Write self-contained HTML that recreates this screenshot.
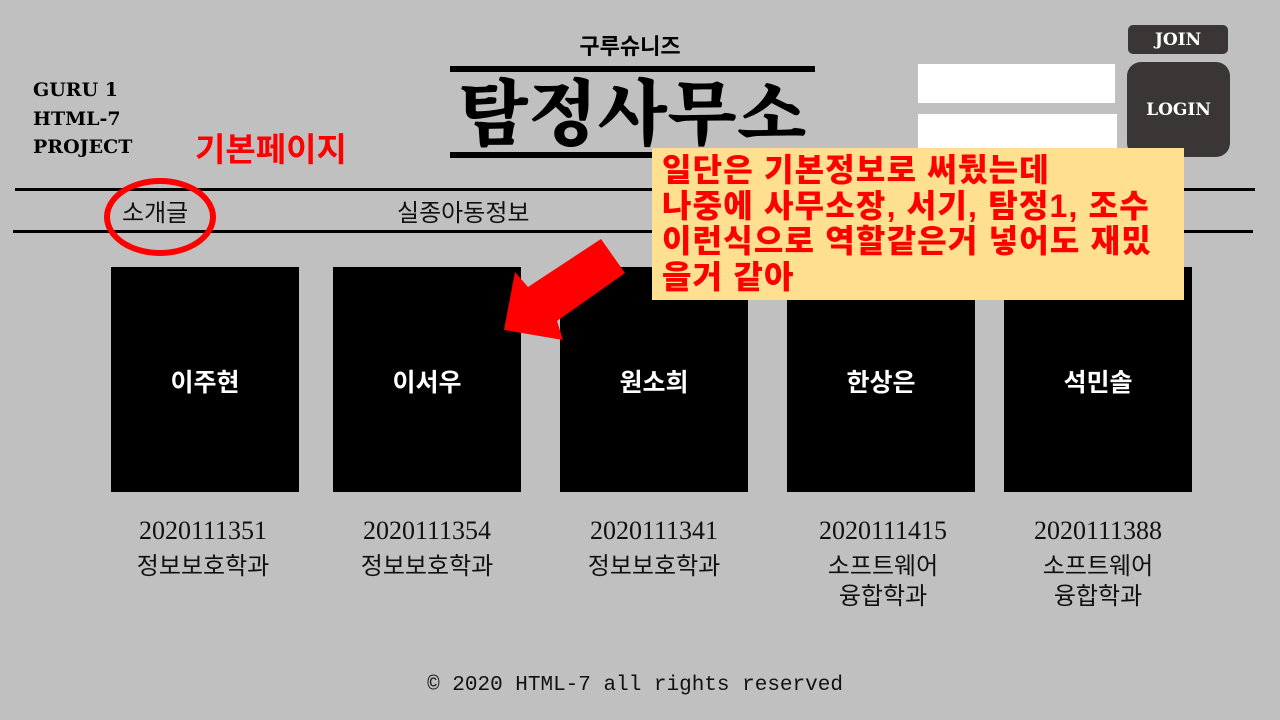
<!DOCTYPE html>
<html><head><meta charset="utf-8"><style>
body{margin:0;width:1280px;height:720px;background:#c0c0c0;position:relative;overflow:hidden;font-family:"Liberation Sans","Noto Sans CJK KR",sans-serif}
.a{position:absolute}
.line{position:absolute;background:#000}
.card{position:absolute;top:267px;width:188px;height:225px;background:#000;color:#fff;font-weight:bold;font-size:25px;text-align:center;line-height:232px}
.info{position:absolute;top:513px;width:240px;text-align:center;font-family:"Liberation Serif","Noto Sans CJK KR",serif;font-size:26px;line-height:36px;color:#111}
.info span{display:block;font-family:"Liberation Sans","Noto Sans CJK KR",sans-serif;font-size:24px;line-height:30px;margin-top:3px}
.g{font-family:"DejaVu Serif",serif;font-weight:bold;font-size:19px;line-height:28.5px;color:#000}
</style></head><body>
<div class="a" style="left:560px;top:32px;width:140px;text-align:center;font-weight:bold;font-size:22px;line-height:30px">구루슈니즈</div>
<div class="line" style="left:450px;top:66px;width:365px;height:6px"></div>
<div class="a" style="left:440px;top:64px;width:385px;text-align:center;font-family:'Noto Serif CJK SC','Noto Sans CJK KR',serif;font-weight:900;font-size:72px;line-height:88px">탐정사무소</div>
<div class="line" style="left:450px;top:152px;width:365px;height:6px"></div>
<div class="a g" style="left:33px;top:76px">GURU 1<br>HTML-7<br>PROJECT</div>
<div class="a" style="left:195px;top:130px;color:#f00;font-weight:bold;font-size:33px;line-height:40px">기본페이지</div>
<div class="line" style="left:15px;top:188px;width:1240px;height:3px"></div>
<div class="line" style="left:13px;top:230px;width:1240px;height:3px"></div>
<div class="a" style="left:122px;top:199px;font-size:24px;line-height:30px;color:#111">소개글</div>
<div class="a" style="left:397px;top:199px;font-size:24px;line-height:30px;color:#111">실종아동정보</div>
<div class="a" style="left:104px;top:178px;width:100px;height:66px;border:6px solid #f00;border-radius:50%"></div>
<div class="a" style="left:918px;top:64px;width:197px;height:39px;background:#fff"></div>
<div class="a" style="left:918px;top:114px;width:199px;height:40px;background:#fff"></div>
<div class="a" style="left:1128px;top:25px;width:100px;height:29px;background:#3a3636;border-radius:5px;color:#fff;font-family:'DejaVu Serif',serif;font-weight:bold;font-size:17px;line-height:31px;text-align:center">JOIN</div>
<div class="a" style="left:1127px;top:62px;width:103px;height:95px;background:#3a3636;border-radius:14px;color:#fff;font-family:'DejaVu Serif',serif;font-weight:bold;font-size:17px;line-height:97px;text-align:center">LOGIN</div>
<div class="card" style="left:111px">이주현</div>
<div class="card" style="left:333px">이서우</div>
<div class="card" style="left:560px">원소희</div>
<div class="card" style="left:787px">한상은</div>
<div class="card" style="left:1004px">석민솔</div>
<div class="info" style="left:83px">2020111351<span>정보보호학과</span></div>
<div class="info" style="left:307px">2020111354<span>정보보호학과</span></div>
<div class="info" style="left:534px">2020111341<span>정보보호학과</span></div>
<div class="info" style="left:763px">2020111415<span>소프트웨어<br>융합학과</span></div>
<div class="info" style="left:978px">2020111388<span>소프트웨어<br>융합학과</span></div>
<svg class="a" style="left:0;top:0" width="1280" height="720"><polygon points="504,330 515,272 528,287 601,239 625,273 557,321 563,340" fill="#f00"/></svg>
<div class="a" style="left:652px;top:148px;width:532px;height:152px;background:#ffe090"></div>
<div class="a" style="left:662px;top:153px;color:#f00;font-weight:900;font-size:32px;line-height:35.5px;letter-spacing:1.2px;white-space:nowrap">일단은 기본정보로 써뒀는데<br>나중에 사무소장, 서기, 탐정1, 조수<br>이런식으로 역할같은거 넣어도 재밌<br>을거 같아</div>
<div class="a" style="left:0;width:1270px;top:672px;text-align:center;font-family:'Liberation Mono',monospace;font-size:21px;line-height:28px;color:#111">© 2020 HTML-7 all rights reserved</div>
</body></html>
